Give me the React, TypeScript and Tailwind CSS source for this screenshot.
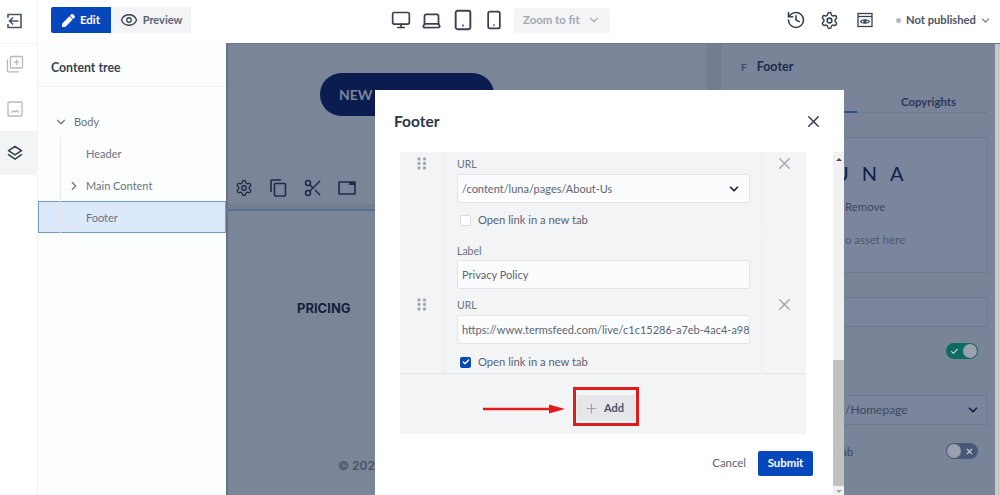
import React from "react";
import { Monitor, Laptop, Tablet, Smartphone, ChevronDown, ChevronRight, History, Settings, Scissors, X, Plus, Eye, Check } from "lucide-react";
import { FaPen } from "react-icons/fa";

function ExitIcon() {
  return (
    <svg width="18" height="18" viewBox="0 0 18 18" fill="none" stroke="#4b5563" strokeWidth="1.6">
      <path d="M2 6V2.5h13v13H2V12" />
      <path d="M12.5 9H3.5M7 5.5 3.5 9 7 12.5" />
    </svg>
  );
}
function AddContentIcon() {
  return (
    <svg width="18" height="18" viewBox="0 0 18 18" fill="none" stroke="#b4b9c2" strokeWidth="1.3">
      <rect x="4.5" y="1.5" width="12" height="11.5" rx="1" />
      <path d="M1.5 4.5v11.5a.8.8 0 0 0 .8.8H13M10.5 4.5v5.5M7.7 7.2h5.6" />
    </svg>
  );
}
function ImageIcon() {
  return (
    <svg width="16" height="16" viewBox="0 0 16 16" fill="none" stroke="#b4b9c2" strokeWidth="1.3">
      <rect x="1" y="1" width="14" height="14" rx="1" />
      <path d="M4 11.5 6.5 10l1.5 1 1.5-1.5 2.5 2" />
    </svg>
  );
}
function LayersIcon() {
  return (
    <svg width="16" height="16" viewBox="0 0 16 16" fill="none" stroke="#374151" strokeWidth="1.6" strokeLinejoin="round" strokeLinecap="round">
      <path d="M8 1.5 14.5 5.7 8 9.9 1.5 5.7Z" />
      <path d="M1.5 9.6 8 14.2l6.5-4.6" />
    </svg>
  );
}
function BrowserEye() {
  return (
    <svg width="16" height="16" viewBox="0 0 16 16" fill="none" stroke="#374151" strokeWidth="1.3">
      <rect x="1" y="1.5" width="14" height="13" />
      <path d="M1 4.5h14" />
      <path d="M3.5 9.5C5 7.3 11 7.3 12.5 9.5 11 11.7 5 11.7 3.5 9.5Z" />
      <circle cx="8" cy="9.5" r="1" />
    </svg>
  );
}
function CopyIcon() {
  return (
    <svg width="17" height="18" viewBox="0 0 17 18" fill="none" stroke="#1e2a4a" strokeWidth="1.6">
      <path d="M1 13V1.8a.8.8 0 0 1 .8-.8H11" />
      <rect x="4.5" y="4.5" width="11" height="12.5" rx="1" />
    </svg>
  );
}
function WindowIcon() {
  return (
    <svg width="18" height="16" viewBox="0 0 18 16" fill="none" stroke="#1e2a4a" strokeWidth="1.6">
      <rect x="1" y="2" width="16" height="12" rx="0.5" />
      <rect x="11" y="2" width="6" height="3" fill="#1e2a4a" stroke="none" />
    </svg>
  );
}
function DragDots() {
  return (
    <svg width="10" height="13" viewBox="0 0 10 13" fill="#9ca3af">
      <rect x="0.5" y="0.5" width="3" height="3" rx="1" />
      <rect x="6" y="0.5" width="3" height="3" rx="1" />
      <rect x="0.5" y="5" width="3" height="3" rx="1" />
      <rect x="6" y="5" width="3" height="3" rx="1" />
      <rect x="0.5" y="9.5" width="3" height="3" rx="1" />
      <rect x="6" y="9.5" width="3" height="3" rx="1" />
    </svg>
  );
}

function CheckRow({ checked }: { checked?: boolean }) {
  return (
    <div className="flex items-center h-[16px] pl-[3px] gap-[7px]">
      {checked ? (
        <span className="w-[11px] h-[11px] rounded-[2px] bg-[#0a47b5] flex items-center justify-center">
          <Check size={8} strokeWidth={4} color="#ffffff" />
        </span>
      ) : (
        <span className="w-[11px] h-[11px] rounded-[2px] bg-white border border-[#d9dce1]" />
      )}
      <span className="text-[11.2px] text-[#5b6472]">Open link in a new tab</span>
    </div>
  );
}

function Field({ children, className }: { children: React.ReactNode; className?: string }) {
  return (
    <div className={"h-[29px] w-[293px] bg-[#fbfcfd] border border-[#e2e5ea] rounded-[2px] flex items-center pl-[4px] pr-[4px] pt-[1px] overflow-hidden whitespace-nowrap text-[11px] text-[#5b6472] " + (className ?? "")}>
      {children}
    </div>
  );
}

function Toggle({ on }: { on: boolean }) {
  return on ? (
    <div className="w-[32px] h-[16px] rounded-full bg-[#0d6b63] flex items-center justify-between pl-[4px] pr-[1px]">
      <Check size={9} strokeWidth={3} color="#c5cbd4" />
      <span className="w-[14px] h-[14px] rounded-full bg-[#9aa0ad]" />
    </div>
  ) : (
    <div className="w-[32px] h-[16px] rounded-full bg-[#4a5878] flex items-center justify-between pl-[1px] pr-[4px]">
      <span className="w-[14px] h-[14px] rounded-full bg-[#9aa0ad]" />
      <X size={9} strokeWidth={3} color="#c5cbd4" />
    </div>
  );
}

export default function App() {
  return (
    <div className="relative w-[1000px] h-[495px] overflow-hidden bg-white flex flex-col text-[11px] text-[#374151] font-['Lato',sans-serif]">
      {/* top bar */}
      <header className="h-[43px] shrink-0 flex items-center bg-white">
        <div className="w-[38px] h-full flex items-center justify-center pr-[8px] border-r border-[#f3f4f6]">
          <span className="-mt-[2px] flex"><ExitIcon /></span>
        </div>
        <div className="ml-[13px] -mt-[3px] flex items-center h-[26px]">
          <div className="w-[60px] h-full bg-[#0747bd] rounded-l-[2px] flex items-center justify-center gap-[5px] text-white font-bold text-[11.5px]">
            <FaPen size={13} />
            <span>Edit</span>
          </div>
          <div className="w-[80px] h-full bg-[#f3f4f6] rounded-r-[2px] flex items-center justify-center gap-[5px] text-[#5b6472] font-bold text-[11px]">
            <Eye size={18} color="#374151" strokeWidth={1.7} />
            <span>Preview</span>
          </div>
        </div>
        <div className="ml-[200px] -mt-[3px] flex items-center text-[#374151]">
          <Monitor size={20} strokeWidth={2} />
          <Laptop size={21} strokeWidth={2} className="ml-[10px]" />
          <Tablet size={22} strokeWidth={2.1} className="ml-[10px]" />
          <Smartphone size={20} strokeWidth={2.1} className="ml-[10px]" />
          <div className="ml-[10px] w-[96px] h-[25px] bg-[#f3f4f6] rounded-[2px] flex items-center pl-[9px] gap-[7px] text-[#a3a9b3] text-[11.4px] font-bold">
            <span>Zoom to fit</span>
            <ChevronDown size={14} strokeWidth={2} />
          </div>
        </div>
        <div className="ml-[176px] -mt-[3px] flex items-center text-[#374151]">
          <History size={20} strokeWidth={1.9} />
          <Settings size={19} strokeWidth={1.9} className="ml-[14px]" />
          <span className="ml-[18px] flex"><BrowserEye /></span>
          <span className="ml-[23px] w-[5px] h-[5px] rounded-full bg-[#b4b9c2]" />
          <span className="ml-[5px] text-[11.2px] text-[#4b5563] font-bold whitespace-nowrap">Not published</span>
          <ChevronDown size={13} strokeWidth={2} className="ml-[3px] text-[#6b7280]" />
        </div>
      </header>

      <div className="flex flex-1 min-h-0">
        {/* icon rail */}
        <nav className="w-[38px] shrink-0 flex flex-col border-r border-[#f3f4f6]">
          <div className="h-[44px] flex items-center justify-center pr-[7px] border-t border-[#f3f4f6]"><span className="-mt-[3px] flex"><AddContentIcon /></span></div>
          <div className="h-[44px] flex items-center justify-center pr-[7px]"><ImageIcon /></div>
          <div className="h-[44px] flex items-center justify-center pr-[7px] bg-[#f3f4f6]"><LayersIcon /></div>
        </nav>

        {/* content tree */}
        <aside className="w-[188px] shrink-0 bg-[#fcfdfe] flex flex-col">
          <div className="h-[44px] flex items-center pl-[13px] pt-[7px] border-b border-[#f1f2f4] font-bold text-[12.3px] text-[#374151]">Content tree</div>
          <div className="relative pt-[19px] text-[#6b7280]">
            <span className="absolute left-[22px] top-[50px] w-px h-[96px] bg-[#e6e8ec]" />
            <div className="h-[31px] flex items-center pl-[16px] gap-[6px]">
              <ChevronDown size={14} strokeWidth={2} />
              <span className="pt-[2px]">Body</span>
            </div>
            <div className="h-[32px] flex items-center pl-[48px] pt-[2px]">Header</div>
            <div className="h-[32px] flex items-center pl-[29px] pt-[1px] gap-[5px]">
              <ChevronRight size={14} strokeWidth={2} />
              <span className="pt-[2px]">Main Content</span>
            </div>
            <div className="h-[32px] flex items-center pl-[47px] pt-[2px] bg-[#dce9fb] border border-[#6f9bc8]">Footer</div>
          </div>
        </aside>

        {/* dimmed page */}
        <main className="relative flex-1 min-w-0 flex bg-[#7b8598] border-t border-[#6f788a]">
          <div className="relative w-[495px] shrink-0 border-l-2 border-[#667189] overflow-hidden">
            <div className="absolute left-[92px] top-[29px] w-[174px] h-[43px] rounded-full bg-[#0a1c50] pl-[19px] flex items-center font-bold text-[14px] text-[#7b8598]">NEW</div>
            <div className="absolute left-0 right-0 top-[160px] h-[7px] bg-[#747e92] border-b-2 border-[#5a6d96]" />
            <div className="absolute left-[7px] top-[134px] flex items-center text-[#1e2a4a]">
              <Settings size={18} strokeWidth={1.8} />
              <span className="ml-[17px] flex"><CopyIcon /></span>
              <Scissors size={20} strokeWidth={1.8} className="ml-[16px]" />
              <span className="ml-[15px] flex"><WindowIcon /></span>
            </div>
            <span className="absolute left-[69px] top-[255px] font-['Inter',sans-serif] font-bold text-[13px] text-[#141f3c]">PRICING</span>
            <span className="absolute left-[110px] top-[413px] font-['Inter',sans-serif] font-semibold text-[12px] text-[#4a5366]">© 202</span>
            <span className="absolute right-0 top-0 bottom-0 w-[14px] bg-[#737d90]" />
          </div>
          <div className="flex-1 min-w-0 flex">
            <section className="relative w-[272px] shrink-0 bg-[#7a8499]">
              <div className="absolute left-[20px] top-[14px] flex items-center font-bold text-[12.5px] text-[#1e2a4a]">
                <span className="text-[10px] mr-[10px] text-[#3b4660]">F</span>
                <span>Footer</span>
              </div>
              <span className="absolute left-[180px] top-[49px] text-[11.4px] font-bold text-[#2c3858]">Copyrights</span>
              <div className="absolute left-[0px] top-[68px] right-[6px] h-px bg-[#6f798d]" />
              <div className="absolute left-[123px] top-[67px] w-[13px] h-[2px] bg-[#2d4f94]" />
              <div className="absolute left-[20px] top-[93px] right-[6px] h-[136px] border border-[#717b90] bg-[#7b869d]" />
              <span className="absolute left-[113px] top-[116px] text-[20px] leading-[26px] tracking-[13px] text-[#0f1f4f]">UNA</span>
              <span className="absolute left-[124px] top-[154px] text-[11.4px] text-[#3b4660]">Remove</span>
              <span className="absolute left-[124px] top-[187px] text-[11.4px] text-[#4d5870]">o asset here</span>
              <div className="absolute left-[20px] top-[253px] right-[6px] h-[30px] border border-[#717b90] bg-[#7b869d]" />
              <div className="absolute right-[15px] top-[299px]"><Toggle on /></div>
              <div className="absolute left-[20px] top-[351px] right-[6px] h-[30px] border border-[#717b90] bg-[#7b869d] flex items-center justify-between pl-[103px] pr-[6px] text-[12px] text-[#3b4660]">
                <span>/Homepage</span>
                <ChevronDown size={14} strokeWidth={3} color="#0f1f4f" />
              </div>
              <span className="absolute left-[116px] top-[399px] text-[11.4px] text-[#3b4660]">tab</span>
              <div className="absolute right-[15px] top-[399px]"><Toggle on={false} /></div>
            </section>
            <div className="ml-[2px] flex-1 bg-[#c8c8c8]" />
          </div>
        </main>
      </div>

      {/* modal */}
      <div className="absolute left-[375px] top-[90px] w-[469px] h-[405px] bg-white flex">
        <div className="w-[458px] shrink-0 flex flex-col">
          <div className="h-[62px] shrink-0 flex items-center justify-between pl-[19px] pr-[10px] pt-[2px]">
            <span className="text-[15.5px] font-bold text-[#2b3648]">Footer</span>
            <X size={19} strokeWidth={1.9} color="#374151" className="-mt-[2px]" />
          </div>
          <div className="ml-[25px] w-[406px] h-[282px] shrink-0 bg-[#f3f4f6] flex flex-col">
            <div className="h-[77px] shrink-0 flex">
              <div className="w-[44px] shrink-0 flex justify-center pt-[5px]"><DragDots /></div>
              <div className="w-[319px] shrink-0 border-x border-[#eaecef] pl-[12px] pt-[6px]">
                <div className="h-[16px] leading-[12px] text-[10.5px] text-[#6b7280]">URL</div>
                <Field className="justify-between">
                  <span>/content/luna/pages/About-Us</span>
                  <ChevronDown size={14} strokeWidth={3} color="#1f2937" className="mr-[4px]" />
                </Field>
                <div className="mt-[9px]"><CheckRow /></div>
              </div>
              <div className="flex-1 flex justify-center pt-[2px]"><X size={19} strokeWidth={1.8} color="#a3a9b3" /></div>
            </div>
            <div className="h-[7px] shrink-0" />
            <div className="h-[138px] shrink-0 flex items-center border-b border-[#e4e6ea]">
              <div className="w-[44px] shrink-0 flex justify-center"><DragDots /></div>
              <div className="w-[319px] h-full shrink-0 border-x border-[#eaecef] pl-[12px] pt-[8px]">
                <div className="h-[16px] text-[10.5px] leading-[14px] text-[#6b7280]">Label</div>
                <Field>Privacy Policy</Field>
                <div className="mt-[9px] h-[17px] text-[10.5px] leading-[14px] text-[#6b7280]">URL</div>
                <Field>https://www.termsfeed.com/live/c1c15286-a7eb-4ac4-a98</Field>
                <div className="mt-[10px]"><CheckRow checked /></div>
              </div>
              <div className="flex-1 flex justify-center"><X size={19} strokeWidth={1.8} color="#a3a9b3" /></div>
            </div>
            <div className="flex-1 flex items-center pl-[177px] pt-[8px]">
              <div className="w-[58px] h-[26px] pl-[7px] bg-[#e5e7eb] flex items-center gap-[5px] text-[#4b5563] font-bold text-[11px]">
                <Plus size={15} strokeWidth={1.8} color="#9ca3af" />
                <span>Add</span>
              </div>
            </div>
          </div>
          <div className="flex-1 flex items-center justify-end pr-[20px] -mt-[3px]">
            <span className="text-[#5b6472] text-[11.4px]">Cancel</span>
            <span className="ml-[12px] w-[55px] h-[25px] rounded-[2px] bg-[#0747bd] flex items-center justify-center text-white font-bold text-[11.4px]">Submit</span>
          </div>
        </div>
        <div className="relative flex-1 bg-[#f1f1f1] mt-[62px]">
          <span className="absolute left-[3px] top-[6px] w-0 h-0 border-x-[3px] border-x-transparent border-b-[3px] border-b-[#505050]" />
          <span className="absolute left-0 right-0 top-[208px] h-[126px] bg-[#c1c1c1]" />
          <span className="absolute left-[3px] bottom-[2px] w-0 h-0 border-x-[3px] border-x-transparent border-t-[3px] border-t-[#a3a3a3]" />
        </div>
      </div>

      {/* annotation */}
      <div className="absolute left-[573px] top-[387px] w-[66px] h-[39px] border-[3px] border-[#e01b1b]" />
      <svg className="absolute left-[482px] top-[402px]" width="84" height="14" viewBox="0 0 84 14">
        <path d="M1 7h68" stroke="#e01b1b" strokeWidth="2.6" />
        <path d="M67 2.5 83 7 67 11.5Z" fill="#e01b1b" />
      </svg>
    </div>
  );
}
